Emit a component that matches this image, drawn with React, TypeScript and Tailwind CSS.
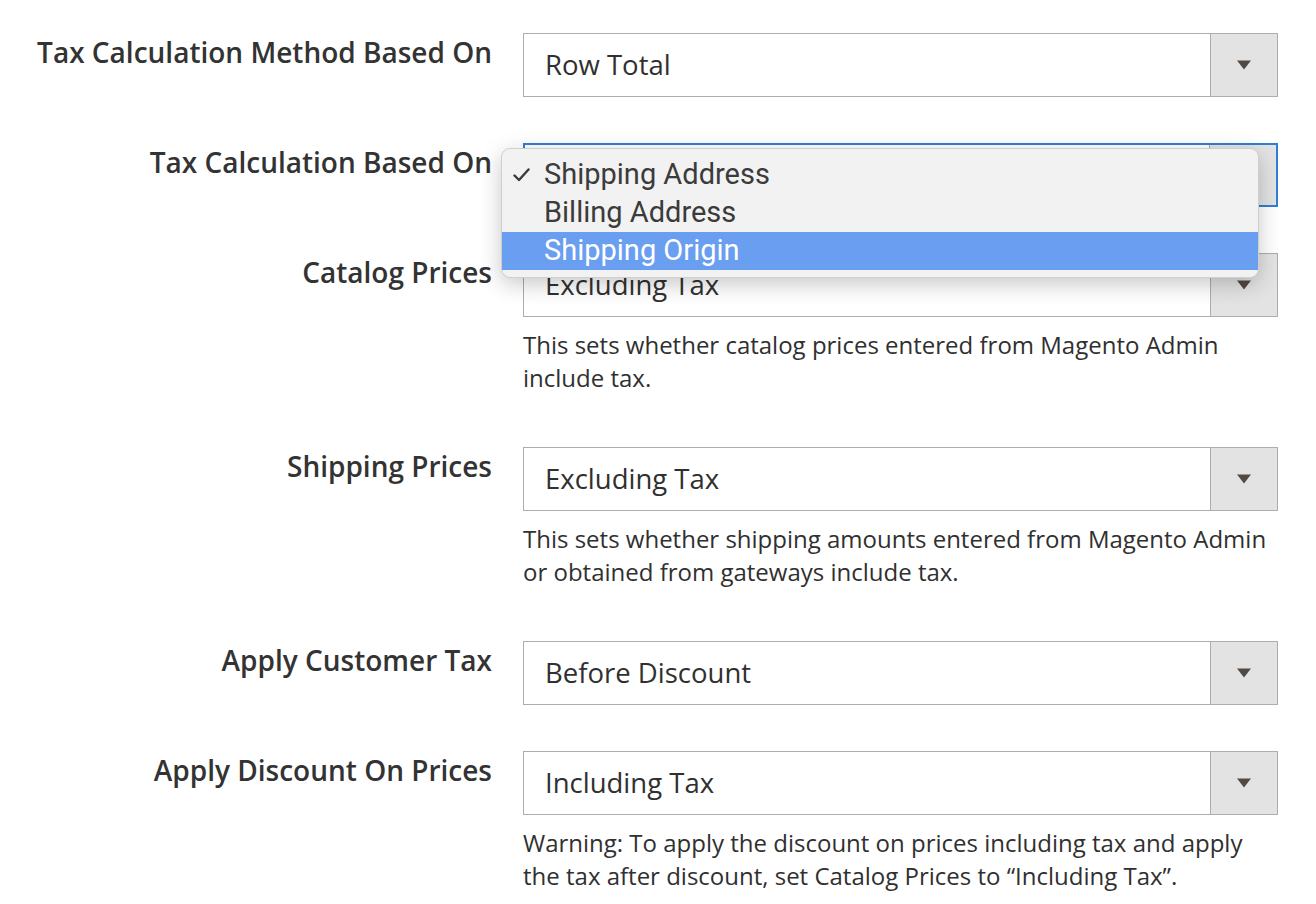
import React from "react";

interface FieldRow {
  label: string;
  value: string;
  note?: string[];
  focused?: boolean;
  menu?: { options: string[]; checked: number; highlighted: number };
}

const rows: FieldRow[] = [
  { label: "Tax Calculation Method Based On", value: "Row Total" },
  {
    label: "Tax Calculation Based On",
    value: "Shipping Address",
    focused: true,
    menu: {
      options: ["Shipping Address", "Billing Address", "Shipping Origin"],
      checked: 0,
      highlighted: 2,
    },
  },
  {
    label: "Catalog Prices",
    value: "Excluding Tax",
    note: ["This sets whether catalog prices entered from Magento Admin", "include tax."],
  },
  {
    label: "Shipping Prices",
    value: "Excluding Tax",
    note: [
      "This sets whether shipping amounts entered from Magento Admin",
      "or obtained from gateways include tax.",
    ],
  },
  { label: "Apply Customer Tax", value: "Before Discount" },
  {
    label: "Apply Discount On Prices",
    value: "Including Tax",
    note: [
      "Warning: To apply the discount on prices including tax and apply",
      "the tax after discount, set Catalog Prices to \u201CIncluding Tax\u201D.",
    ],
  },
];

function SelectBox({ row }: { row: FieldRow }) {
  return (
    <div className="relative">
      <div
        className={`flex h-[64px] w-[755px] bg-white ${
          row.focused ? "border-2 border-[#2f7fd6]" : "border border-[#adadad]"
        }`}
      >
        <div className="flex flex-1 items-center pl-[21px] text-[27.5px] text-[#303030]">
          {row.focused ? "" : row.value}
        </div>
        <div className="flex w-[67px] items-center justify-center border-l border-[#adadad] bg-[#e3e3e3]">
          <svg width="16" height="10" viewBox="0 0 16 10">
            <path d="M1 0.5 H15 L8 9.5 Z" fill="#514943" />
          </svg>
        </div>
      </div>

      {/* open native menu */}
      {row.menu && (
        <div className="absolute left-[-22px] top-[5px] z-10 w-[758px] rounded-[9px] border border-[#cfcfcf] bg-[#f2f2f2] py-[7px] shadow-[0_6px_22px_rgba(0,0,0,0.22)]">
          {row.menu.options.map((opt, i) => {
            const hi = i === row.menu!.highlighted;
            return (
              <div
                key={opt}
                className={`relative flex h-[38px] items-center pl-[42px] text-[29px] ${
                  hi ? "bg-[#6a9ef1] text-white" : "text-[#3b3b3b]"
                }`}
                style={{ fontFamily: "Roboto, 'Liberation Sans', sans-serif" }}
              >
                {i === row.menu!.checked && (
                  <svg
                    className="absolute left-[11px] top-[12px]"
                    width="17"
                    height="14"
                    viewBox="0 0 17 14"
                  >
                    <path
                      d="M1.5 7.5 L6 12 L15.5 1.5"
                      fill="none"
                      stroke="#3b3b3b"
                      strokeWidth="2.4"
                      strokeLinecap="round"
                      strokeLinejoin="round"
                    />
                  </svg>
                )}
                {opt}
              </div>
            );
          })}
        </div>
      )}

      {row.note && (
        <div className="mb-[7px] mt-[11px] text-[24px] leading-[33px] text-[#303030]">
          {row.note.map((line) => (
            <div key={line}>{line}</div>
          ))}
        </div>
      )}
    </div>
  );
}

export default function App() {
  return (
    <div
      className="min-h-screen w-[1316px] bg-white pt-[33px]"
      style={{ fontFamily: "'Open Sans', 'Noto Sans', sans-serif" }}
    >
      <div className="flex flex-col gap-[46px]">
        {rows.map((row) => (
          <div key={row.label} className="flex gap-[31px]">
            <div className="w-[492px] pt-[1px] text-right text-[28px] font-semibold leading-[36px] text-[#333333]">
              {row.label}
            </div>
            <SelectBox row={row} />
          </div>
        ))}
      </div>
    </div>
  );
}
